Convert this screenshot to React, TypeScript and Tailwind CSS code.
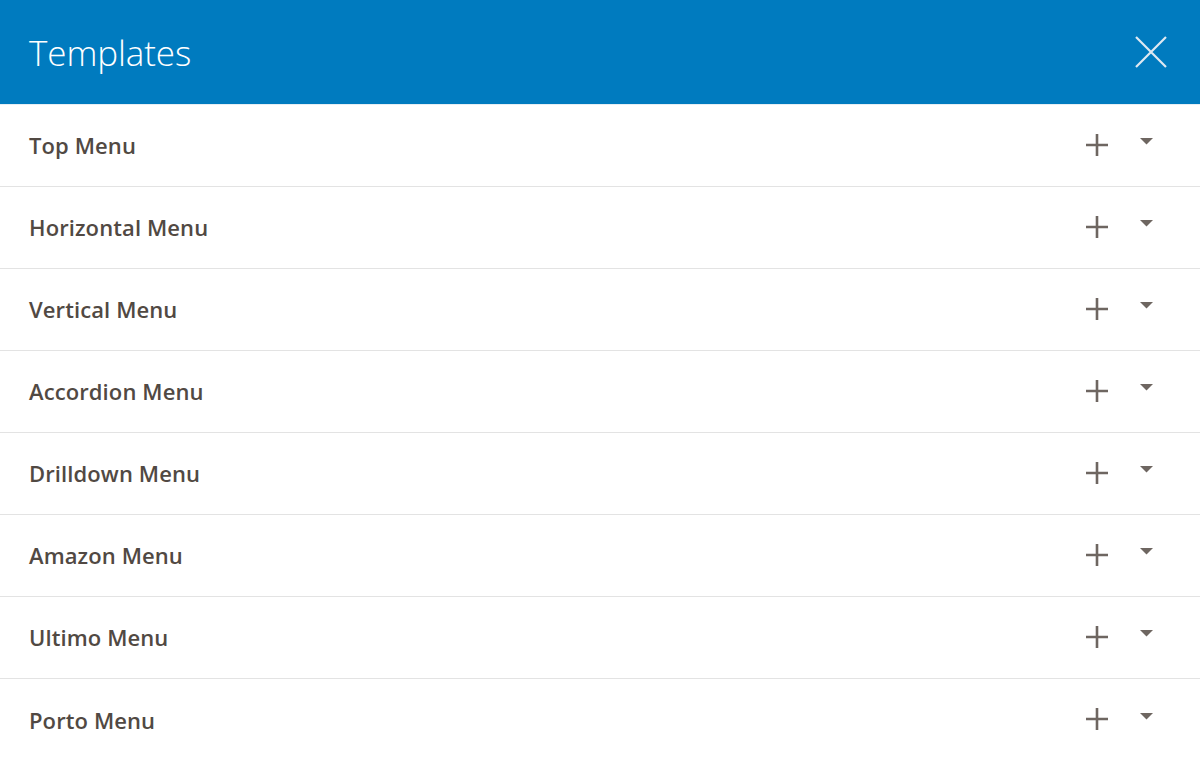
const items = [
  "Top Menu",
  "Horizontal Menu",
  "Vertical Menu",
  "Accordion Menu",
  "Drilldown Menu",
  "Amazon Menu",
  "Ultimo Menu",
  "Porto Menu",
];

function PlusIcon() {
  return (
    <svg width="22" height="22" viewBox="0 0 22 22" className="block">
      <path d="M11 0v22M0 11h22" stroke="#6e6661" strokeWidth="2.6" fill="none" />
    </svg>
  );
}

function Caret() {
  return (
    <svg width="13" height="7" viewBox="0 0 13 7" className="block">
      <path d="M0 0h13L6.5 6.5z" fill="#6e6661" />
    </svg>
  );
}

export default function App() {
  return (
    <div className="w-[1200px] h-[758px] overflow-hidden bg-white font-['Open_Sans',sans-serif]">
      <div className="h-[105px] bg-[#007bbf] flex items-center justify-between pl-[29px] pr-[33px] border-b border-[#e6eef4]">
        <h1 className="text-[35px] font-light text-white leading-none tracking-[-0.1px]">
          Templates
        </h1>
        <button className="w-[32px] h-[32px] flex items-center justify-center">
          <svg width="32" height="32" viewBox="0 0 32 32" className="block">
            <path d="M1 1l30 30M31 1L1 31" stroke="#dfe9f2" strokeWidth="2.2" fill="none" />
          </svg>
        </button>
      </div>
      <ul>
        {items.map((name, i) => (
          <li
            key={name}
            className={
              "h-[82px] flex items-center justify-between pl-[29px] pr-[47px] " +
              (i < items.length - 1 ? "border-b border-[#e3e3e3]" : "")
            }
          >
            <span className="text-[22px] font-semibold text-[#514943] tracking-[0.1px]">{name}</span>
            <div className="flex items-center gap-[32px] -mt-[2px]">
              <PlusIcon />
              <div className="-mt-[6px]">
                <Caret />
              </div>
            </div>
          </li>
        ))}
      </ul>
    </div>
  );
}
